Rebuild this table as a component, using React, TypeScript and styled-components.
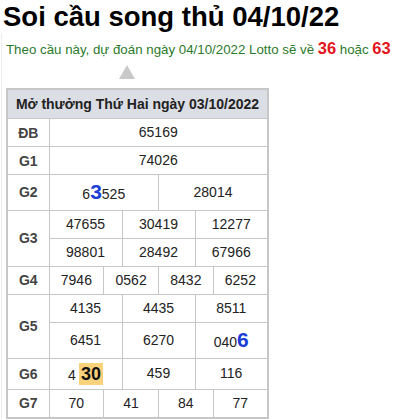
import * as React from "react";
import styled, { createGlobalStyle } from "styled-components";

const GlobalStyle = createGlobalStyle`
  body {
    margin: 0;
    background: #fff;
    font-family: "Liberation Sans", Arial, sans-serif;
  }
`;

type Part = { text: string; hot?: "blue" | "gold" };

interface IRow {
  label: string;
  lines: Part[][][];
}

// each cell is a list of parts so a single digit can be highlighted
const p = (text: string, hot?: "blue" | "gold"): Part => ({ text, hot });

const rows: IRow[] = [
  { label: "ĐB", lines: [[[p("65169")]]] },
  { label: "G1", lines: [[[p("74026")]]] },
  { label: "G2", lines: [[[p("6"), p("3", "blue"), p("525")], [p("28014")]]] },
  {
    label: "G3",
    lines: [
      [[p("47655")], [p("30419")], [p("12277")]],
      [[p("98801")], [p("28492")], [p("67966")]],
    ],
  },
  { label: "G4", lines: [[[p("7946")], [p("0562")], [p("8432")], [p("6252")]]] },
  {
    label: "G5",
    lines: [
      [[p("4135")], [p("4435")], [p("8511")]],
      [[p("6451")], [p("6270")], [p("040"), p("6", "blue")]],
    ],
  },
  { label: "G6", lines: [[[p("4"), p("30", "gold")], [p("459")], [p("116")]]] },
  { label: "G7", lines: [[[p("70")], [p("41")], [p("84")], [p("77")]]] },
];

const App: React.FunctionComponent = () => {
  return (
    <>
      <GlobalStyle />
      <Page>
        <Title>Soi cầu song thủ 04/10/22</Title>
        <Body>
          <Lead>
            Theo cầu này, dự đoán ngày 04/10/2022 Lotto sẽ về <Pick>36</Pick> hoặc{" "}
            <Pick>63</Pick>
          </Lead>
          <Arrow />
          <Table>
            <colgroup>
              <col style={{ width: 42 }} />
              {Array.from({ length: 12 }).map((_, i) => (
                <col key={i} />
              ))}
            </colgroup>
            <thead>
              <tr>
                <Head colSpan={13}>Mở thưởng Thứ Hai ngày 03/10/2022</Head>
              </tr>
            </thead>
            <tbody>
              {rows.map((row) =>
                row.lines.map((line, li) => (
                  <tr key={row.label + li}>
                    {li === 0 && <Label rowSpan={row.lines.length}>{row.label}</Label>}
                    {line.map((cell, ci) => (
                      <Cell key={ci} colSpan={12 / line.length}>
                        {cell.map((part, pi) =>
                          part.hot === "blue" ? (
                            <Blue key={pi}>{part.text}</Blue>
                          ) : part.hot === "gold" ? (
                            <Gold key={pi}>{part.text}</Gold>
                          ) : (
                            <span key={pi}>{part.text}</span>
                          )
                        )}
                      </Cell>
                    ))}
                  </tr>
                ))
              )}
            </tbody>
          </Table>
        </Body>
      </Page>
    </>
  );
};

const Page = styled.div`
  width: 395px;
  color: #222;
`;

const Title = styled.h1`
  margin: 0;
  padding: 2px 0 0 3px;
  font-size: 27.5px;
  line-height: 30px;
  font-weight: 700;
  color: #000;
`;

const Body = styled.div`
  margin-top: 1px;
  border-left: 1px solid #ececec;
  margin-left: 1px;
  padding: 6px 0 0 4px;
`;

const Lead = styled.p`
  margin: 0;
  font-size: 13.3px;
  line-height: 18px;
  color: #2b7a2b;
  white-space: nowrap;
`;

const Pick = styled.b`
  color: #e3141b;
  font-size: 16.5px;
`;

const Arrow = styled.div`
  width: 0;
  height: 0;
  margin: 6px 0 9px 113px;
  border-left: 8px solid transparent;
  border-right: 8px solid transparent;
  border-bottom: 14px solid #c9c9c9;
`;

const Table = styled.table`
  width: 263px;
  table-layout: fixed;
  border-collapse: collapse;
  border: 2px solid #c7c7c7;
  font-size: 14px;
`;

const Head = styled.th`
  height: 28px;
  padding: 0;
  background: #dcdee5;
  border: 1px solid #c7c7c7;
  font-size: 14px;
  font-weight: 700;
  color: #222;
`;

const Label = styled.td`
  padding: 0;
  text-align: center;
  font-weight: 700;
  color: #444;
  border: 1px solid #c7c7c7;
`;

const Cell = styled.td`
  height: 19px;
  padding: 4px 0;
  line-height: 1.2;
  text-align: center;
  color: #222;
  border: 1px solid #c7c7c7;
  white-space: nowrap;
`;

const Blue = styled.span`
  color: #1a3dd6;
  font-weight: 700;
  font-size: 21px;
  line-height: 1.28;
`;

const Gold = styled.span`
  display: inline-block;
  padding: 0 2px;
  margin-left: 3px;
  line-height: 22px;
  background: #fbd27c;
  font-weight: 700;
  font-size: 18px;
  color: #111;
`;

export default App;
